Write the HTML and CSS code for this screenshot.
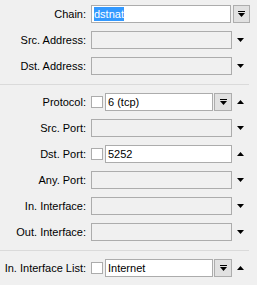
FILE: index.html
```html
<!DOCTYPE html>
<html lang="en">
<head>
    <meta charset="UTF-8">
    <title>Firewall Rule</title>
    <link rel="stylesheet" href="styles.css">
</head>
<body>
    <div class="form">
        <div class="row">
            <label class="lbl">Chain:</label>
            <div class="field wide">
                <div class="input on"><span class="sel">dstnat</span></div>
                <div class="btn">
                    <svg width="7" height="6" viewBox="0 0 7 6"><rect x="0" y="0" width="7" height="1"/><polygon points="0,2 7,2 3.5,6"/></svg>
                </div>
            </div>
        </div>
        <div class="row">
            <label class="lbl">Src. Address:</label>
            <div class="field"><div class="input"></div></div>
            <div class="arrow"><svg width="7" height="4" viewBox="0 0 7 4"><polygon points="0,0 7,0 3.5,4"/></svg></div>
        </div>
        <div class="row">
            <label class="lbl">Dst. Address:</label>
            <div class="field"><div class="input"></div></div>
            <div class="arrow"><svg width="7" height="4" viewBox="0 0 7 4"><polygon points="0,0 7,0 3.5,4"/></svg></div>
        </div>

        <div class="sep"></div>

        <div class="row">
            <label class="lbl">Protocol:</label>
            <div class="field">
                <div class="check"></div>
                <div class="input on">6 (tcp)</div>
                <div class="btn">
                    <svg width="7" height="6" viewBox="0 0 7 6"><rect x="0" y="0" width="7" height="1"/><polygon points="0,2 7,2 3.5,6"/></svg>
                </div>
            </div>
            <div class="arrow"><svg width="7" height="4" viewBox="0 0 7 4"><polygon points="0,4 7,4 3.5,0"/></svg></div>
        </div>
        <div class="row">
            <label class="lbl">Src. Port:</label>
            <div class="field"><div class="input"></div></div>
            <div class="arrow"><svg width="7" height="4" viewBox="0 0 7 4"><polygon points="0,0 7,0 3.5,4"/></svg></div>
        </div>
        <div class="row">
            <label class="lbl">Dst. Port:</label>
            <div class="field">
                <div class="check"></div>
                <div class="input on">5252</div>
            </div>
            <div class="arrow"><svg width="7" height="4" viewBox="0 0 7 4"><polygon points="0,4 7,4 3.5,0"/></svg></div>
        </div>
        <div class="row">
            <label class="lbl">Any. Port:</label>
            <div class="field"><div class="input"></div></div>
            <div class="arrow"><svg width="7" height="4" viewBox="0 0 7 4"><polygon points="0,0 7,0 3.5,4"/></svg></div>
        </div>
        <div class="row">
            <label class="lbl">In. Interface:</label>
            <div class="field"><div class="input"></div></div>
            <div class="arrow"><svg width="7" height="4" viewBox="0 0 7 4"><polygon points="0,0 7,0 3.5,4"/></svg></div>
        </div>
        <div class="row">
            <label class="lbl">Out. Interface:</label>
            <div class="field"><div class="input"></div></div>
            <div class="arrow"><svg width="7" height="4" viewBox="0 0 7 4"><polygon points="0,0 7,0 3.5,4"/></svg></div>
        </div>

        <div class="sep"></div>

        <div class="row">
            <label class="lbl">In. Interface List:</label>
            <div class="field">
                <div class="check"></div>
                <div class="input on">Internet</div>
                <div class="btn">
                    <svg width="7" height="6" viewBox="0 0 7 6"><rect x="0" y="0" width="7" height="1"/><polygon points="0,2 7,2 3.5,6"/></svg>
                </div>
            </div>
            <div class="arrow"><svg width="7" height="4" viewBox="0 0 7 4"><polygon points="0,4 7,4 3.5,0"/></svg></div>
        </div>
    </div>
</body>
</html>
```

FILE: styles.css
```css
body {
    margin: 0;
    background-color: #f0f0f0;
    font-family: "Liberation Sans", Arial, sans-serif;
    font-size: 11px;
    color: #000;
}
.form {
    padding-top: 5px;
    display: flex;
    flex-direction: column;
    gap: 8px;
}
.row {
    display: flex;
    align-items: center;
    height: 18px;
}
.lbl {
    width: 86px;
    margin-right: 5px;
    text-align: right;
    white-space: nowrap;
}
.field {
    width: 141px;
    height: 18px;
    display: flex;
    align-items: center;
}
.field.wide {
    width: 159px;
    gap: 2px;
}
.input {
    flex: 1;
    height: 18px;
    box-sizing: border-box;
    border: 1px solid #acacac;
    background-color: #f0f0f0;
    padding-left: 2px;
    line-height: 16px;
    white-space: nowrap;
    overflow: hidden;
}
.input.on {
    background-color: #fff;
}
.sel {
    display: inline-block;
    background-color: #3399ff;
    color: #fff;
    line-height: 14px;
    margin-top: 1px;
    vertical-align: top;
}
.check {
    width: 12px;
    height: 12px;
    box-sizing: border-box;
    border: 1px solid #acacac;
    background-color: #fff;
    margin-right: 2px;
}
.btn {
    width: 18px;
    height: 18px;
    box-sizing: border-box;
    border: 1px solid #adadad;
    background-color: #e1e1e1;
    display: flex;
    align-items: center;
    justify-content: center;
    margin-left: 1px;
}
.field.wide .btn {
    width: 17px;
    margin-left: 0;
}
.arrow {
    width: 8px;
    margin-left: 5px;
    display: flex;
    align-items: center;
}
svg {
    display: block;
    fill: #000;
}
.sep {
    width: 249px;
    height: 1px;
    background-color: #dadada;
    margin: 1px 0 0 0;
}
```
